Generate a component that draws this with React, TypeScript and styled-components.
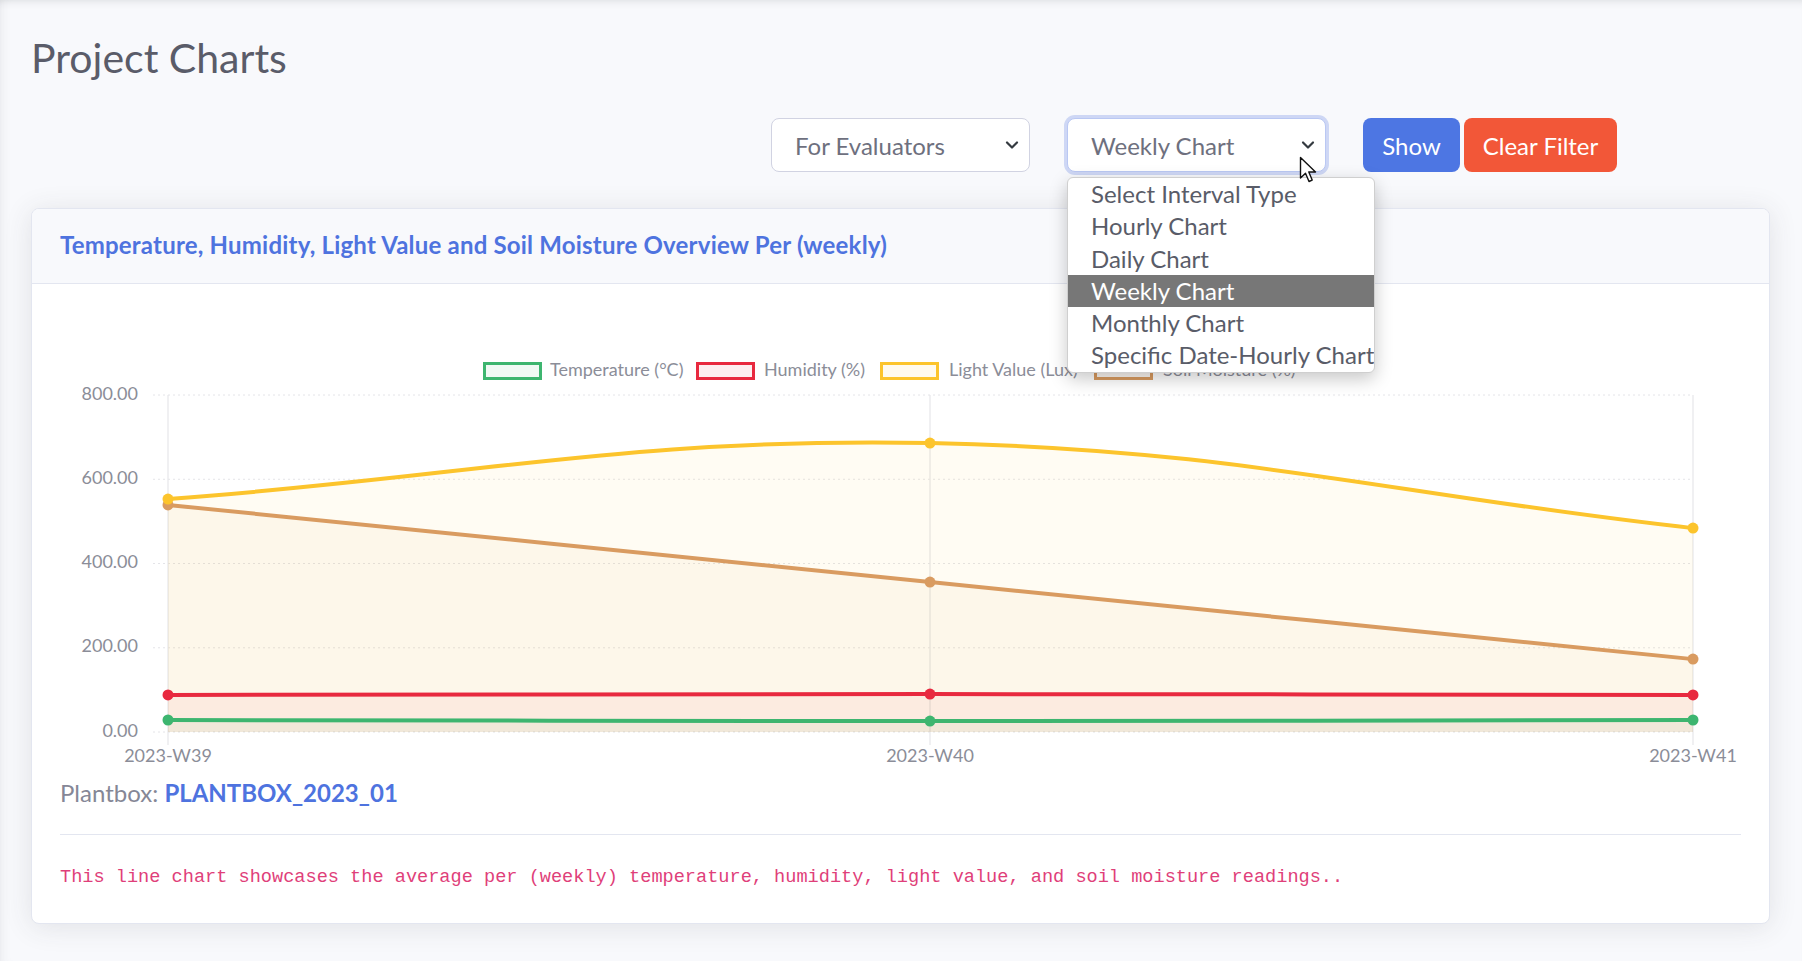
import React from "react";
import styled, { createGlobalStyle } from "styled-components";

const GlobalStyle = createGlobalStyle`
  body {
    margin: 0;
    background: #f8f9fc;
    font-family: Lato, "Open Sans", sans-serif;
  }
`;

const Page = styled.div`
  position: relative;
  min-height: 961px;
  padding: 34px 32px 0 31px;
  box-sizing: border-box;
  box-shadow: inset 0 8px 10px -8px rgba(58, 59, 69, 0.18),
    inset 10px 0 12px -10px rgba(58, 59, 69, 0.1);
`;

const Title = styled.h1`
  margin: 0;
  font-size: 41px;
  line-height: 47px;
  font-weight: 400;
  color: #5a5c69;
`;

const FilterRow = styled.div`
  display: flex;
  align-items: center;
  margin-top: 37px;
  padding-left: 740px;
`;

const SelectWrap = styled.div<{ $gap: number }>`
  position: relative;
  margin-right: ${({ $gap }) => $gap}px;
`;

const SelectBox = styled.div<{ $focused?: boolean; $width: number }>`
  width: ${({ $width }) => $width}px;
  height: 54px;
  box-sizing: border-box;
  display: flex;
  align-items: center;
  justify-content: space-between;
  padding: 0 10px 0 23px;
  background: #fff;
  border: 1px solid ${({ $focused }) => ($focused ? "#bac8f3" : "#d1d3e2")};
  border-radius: 8px;
  box-shadow: ${({ $focused }) =>
    $focused ? "0 0 0 3px rgba(78, 115, 223, 0.25)" : "none"};
  font-size: 24px;
  color: #6e707e;
`;

const Chevron = () => (
  <svg width="14" height="10" viewBox="0 0 14 10">
    <path d="M2 2.5 L7 7.5 L12 2.5" fill="none" stroke="#343a40" strokeWidth="2.2" strokeLinecap="round" strokeLinejoin="round" />
  </svg>
);

const Menu = styled.ul`
  position: absolute;
  top: calc(100% + 5px);
  left: 0;
  width: 306px;
  margin: 0;
  padding: 0;
  list-style: none;
  background: #fff;
  border: 1px solid #cfcfcf;
  border-radius: 6px;
  box-shadow: 0 6px 18px rgba(0, 0, 0, 0.22);
  overflow: hidden;
  z-index: 5;
`;

const MenuItem = styled.li<{ $active?: boolean }>`
  height: 32.3px;
  line-height: 31px;
  padding-left: 23px;
  font-size: 24px;
  white-space: nowrap;
  color: ${({ $active }) => ($active ? "#fff" : "#595c68")};
  background: ${({ $active }) => ($active ? "#777777" : "transparent")};
`;

const Button = styled.button<{ $bg: string; $width: number }>`
  width: ${({ $width }) => $width}px;
  height: 54px;
  margin-right: 4px;
  border: none;
  border-radius: 8px;
  background: ${({ $bg }) => $bg};
  color: #fff;
  font-family: inherit;
  font-size: 24px;
  padding: 0;
  cursor: pointer;
`;

const Cursor = styled.svg`
  position: absolute;
  left: 1299px;
  top: 156px;
  z-index: 10;
`;

const Card = styled.div`
  margin-top: 36px;
  background: #fff;
  border: 1px solid #e3e6f0;
  border-radius: 8px;
  box-shadow: 0 3px 28px rgba(58, 59, 69, 0.12);
  overflow: hidden;
`;

const CardHeader = styled.div`
  height: 74px;
  display: flex;
  align-items: center;
  padding: 0 28px;
  background: #f8f9fc;
  border-bottom: 1px solid #e3e6f0;
`;

const HeaderTitle = styled.h6`
  margin: 0 0 4px;
  font-size: 24px;
  letter-spacing: 0.2px;
  font-weight: 700;
  color: #4e73df;
`;

const CardBody = styled.div`
  padding: 16px 28px 31px;
`;

const ChartSvg = styled.svg`
  display: block;
  width: 100%;
  height: 475px;
  font-family: Lato, "Open Sans", sans-serif;
`;

const PlantLine = styled.p`
  margin: 0;
  font-size: 24px;
  line-height: 36px;
  color: #858796;
  b {
    color: #4e73df;
    font-weight: 700;
  }
`;

const Divider = styled.hr`
  margin: 23px 0 0;
  border: none;
  border-top: 1px solid #e3e6f0;
`;

const Description = styled.code`
  display: block;
  margin-top: 29px;
  font-family: "Liberation Mono", "DejaVu Sans Mono", monospace;
  font-size: 18.6px;
  line-height: 28px;
  color: #df3f7a;
`;

type Pt = { x: number; y: number };

const W = 1681;
const PLOT_TOP = 95;
const PLOT_BOTTOM = 432;
const XS = [108, 870, 1633];
const LABELS = ["2023-W39", "2023-W40", "2023-W41"];
const yFor = (v: number) => PLOT_BOTTOM - (v / 800) * (PLOT_BOTTOM - PLOT_TOP);

const datasets = [
  { label: "Temperature (°C)", color: "#3db56f", data: [28.5, 26, 28.5], lx: 423, tx: 490 },
  { label: "Humidity (%)", color: "#e8293f", data: [88, 90, 88], lx: 636, tx: 704 },
  { label: "Light Value (Lux)", color: "#fcc42c", data: [553, 686, 484], lx: 820, tx: 889 },
  { label: "Soil Moisture (%)", color: "#d99b60", data: [539, 356, 173], lx: 1034, tx: 1103 },
];

// chart.js style bezier with tension
const splinePath = (pts: Pt[], t = 0.4) => {
  const cps = pts.map((cur, i) => {
    const prev = pts[i - 1] || cur;
    const next = pts[i + 1] || cur;
    const d01 = Math.hypot(cur.x - prev.x, cur.y - prev.y);
    const d12 = Math.hypot(next.x - cur.x, next.y - cur.y);
    const sum = d01 + d12 || 1;
    const fa = (t * d01) / sum;
    const fb = (t * d12) / sum;
    return {
      prev: { x: cur.x - fa * (next.x - prev.x), y: cur.y - fa * (next.y - prev.y) },
      next: { x: cur.x + fb * (next.x - prev.x), y: cur.y + fb * (next.y - prev.y) },
    };
  });
  let d = `M${pts[0].x},${pts[0].y}`;
  for (let i = 1; i < pts.length; i++) {
    const a = cps[i - 1].next;
    const b = cps[i].prev;
    d += ` C${a.x},${a.y} ${b.x},${b.y} ${pts[i].x},${pts[i].y}`;
  }
  return d;
};

const Chart = () => {
  const series = datasets.map((ds) => {
    const pts = ds.data.map((v, i) => ({ x: XS[i], y: yFor(v) }));
    const line = splinePath(pts);
    const area = `${line} L${XS[2]},${PLOT_BOTTOM} L${XS[0]},${PLOT_BOTTOM} Z`;
    return { ...ds, pts, line, area };
  });
  const drawOrder = [...series].reverse();

  return (
    <ChartSvg viewBox={`0 0 ${W} 475`} preserveAspectRatio="none">
      {/* legend */}
      {series.map((s) => (
        <g key={s.label}>
          <rect x={s.lx + 1.5} y={63.5} width={56} height={15} fill={s.color} fillOpacity={0.08} stroke={s.color} strokeWidth={3} />
          <text x={s.tx} y={71} dominantBaseline="middle" fontSize="18" fill="#8b8d98">
            {s.label}
          </text>
        </g>
      ))}

      {/* grid */}
      {[0, 200, 400, 600, 800].map((v) => (
        <g key={v}>
          <line x1={93} x2={XS[2]} y1={yFor(v)} y2={yFor(v)} stroke="#e4e4e8" strokeWidth={1} strokeDasharray="2 3" />
          <text x={78} y={yFor(v)} textAnchor="end" dominantBaseline="middle" fontSize="18" fill="#8b8d98">
            {v.toFixed(2)}
          </text>
        </g>
      ))}
      {XS.map((x, i) => (
        <g key={x}>
          <line x1={x} x2={x} y1={PLOT_TOP} y2={PLOT_BOTTOM + 13} stroke="#e6e6e9" strokeWidth={1.2} />
          <text x={x} y={457} textAnchor="middle" dominantBaseline="middle" fontSize="18" fill="#8b8d98">
            {LABELS[i]}
          </text>
        </g>
      ))}

      {/* fills */}
      {drawOrder.map((s) => (
        <path key={s.label + "f"} d={s.area} fill={s.color} fillOpacity={0.055} />
      ))}

      {/* lines + points */}
      {drawOrder.map((s) => (
        <g key={s.label + "l"}>
          <path d={s.line} fill="none" stroke={s.color} strokeWidth={4} />
          {s.pts.map((p) => (
            <circle key={p.x} cx={p.x} cy={p.y} r={5.5} fill={s.color} />
          ))}
        </g>
      ))}
    </ChartSvg>
  );
};

const intervalOptions = [
  "Select Interval Type",
  "Hourly Chart",
  "Daily Chart",
  "Weekly Chart",
  "Monthly Chart",
  "Specific Date-Hourly Chart",
];

export default function App() {
  return (
    <>
      <GlobalStyle />
      <Page>
        <Title>Project Charts</Title>

        <FilterRow>
          <SelectWrap $gap={37}>
            <SelectBox $width={259}>
              <span>For Evaluators</span>
              <Chevron />
            </SelectBox>
          </SelectWrap>
          <SelectWrap $gap={37}>
            <SelectBox $width={259} $focused>
              <span>Weekly Chart</span>
              <Chevron />
            </SelectBox>
            <Menu>
              {intervalOptions.map((o) => (
                <MenuItem key={o} $active={o === "Weekly Chart"}>
                  {o}
                </MenuItem>
              ))}
            </Menu>
          </SelectWrap>
          <Button $bg="#4d76e3" $width={97}>Show</Button>
          <Button $bg="#f25738" $width={153}>Clear Filter</Button>
        </FilterRow>

        <Cursor width="20" height="28" viewBox="0 0 20 28">
          <path d="M1.5 1.5 L1.5 22 L6.5 17.3 L10 25.5 L13.2 24.1 L9.8 16 L16.5 16 Z" fill="#fff" stroke="#111" strokeWidth="1.4" strokeLinejoin="round" />
        </Cursor>

        <Card>
          <CardHeader>
            <HeaderTitle>
              Temperature, Humidity, Light Value and Soil Moisture Overview Per (weekly)
            </HeaderTitle>
          </CardHeader>
          <CardBody>
            <Chart />
            <PlantLine>
              Plantbox: <b>PLANTBOX_2023_01</b>
            </PlantLine>
            <Divider />
            <Description>
              This line chart showcases the average per (weekly) temperature, humidity, light value, and soil moisture readings..
            </Description>
          </CardBody>
        </Card>
      </Page>
    </>
  );
}
